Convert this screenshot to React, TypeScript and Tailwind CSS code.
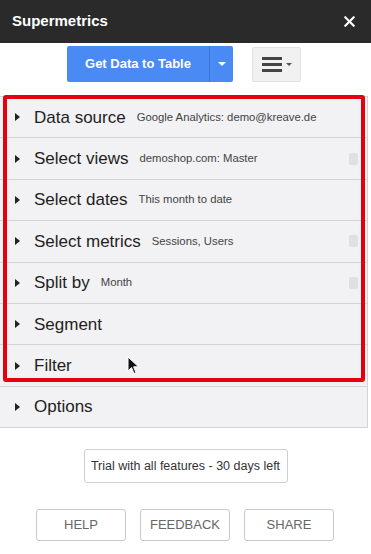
import { X } from 'lucide-react';

type Row = { title: string; sub?: string; knob?: boolean };

const ROWS: Row[] = [
  { title: 'Data source', sub: 'Google Analytics: demo@kreave.de' },
  { title: 'Select views', sub: 'demoshop.com: Master', knob: true },
  { title: 'Select dates', sub: 'This month to date' },
  { title: 'Select metrics', sub: 'Sessions, Users', knob: true },
  { title: 'Split by', sub: 'Month', knob: true },
  { title: 'Segment' },
  { title: 'Filter' },
  { title: 'Options' },
];

function SectionRow({ row }: { row: Row }) {
  return (
    <div className="flex items-center h-[41.4px] border-b border-[#d4d3d6] bg-[#f2f1f3] pl-[15px] pr-[9px]">
      {/* triangle */}
      <span className="w-0 h-0 border-y-[4px] border-y-transparent border-l-[5px] border-l-[#222] mr-[14px]" />
      <span className="text-[17px] text-[#1e1e1e] leading-none">{row.title}</span>
      {row.sub && <span className="ml-[11px] text-[11.3px] text-[#444] leading-none">{row.sub}</span>}
      <span className="flex-1" />
      {row.knob && <span className="w-[9px] h-[12px] rounded-[2px] bg-[#e0dfe2]" />}
    </div>
  );
}

export default function App() {
  return (
    <div className="w-[371px] h-[554px] bg-white overflow-hidden relative font-['Liberation_Sans',Arial,sans-serif]">
      {/* header */}
      <div className="h-[43px] bg-[#2a2a2a] flex items-center justify-between pl-[12px] pr-[13px]">
        <span className="text-white text-[15px] font-bold">Supermetrics</span>
        <X className="text-white" size={17} strokeWidth={3} />
      </div>

      {/* toolbar */}
      <div className="flex items-center h-[40px] mt-[1px] pl-[67px]">
        <div className="flex h-[36px] rounded-[2px] bg-[#4a8af4] overflow-hidden">
          <span className="w-[142px] flex items-center justify-center text-white text-[13px] font-bold">
            Get Data to Table
          </span>
          <span className="w-[24px] flex items-center justify-center border-l border-[#3a76d8]">
            <span className="w-0 h-0 border-x-[4px] border-x-transparent border-t-[4px] border-t-white" />
          </span>
        </div>
        <div className="ml-[19px] w-[49px] h-[35px] rounded-[2px] bg-[#f1f1f1] border border-[#e2e2e2] flex items-center justify-center gap-[4px]">
          <span className="flex flex-col gap-[3px]">
            <span className="block w-[20px] h-[3px] bg-[#444]" />
            <span className="block w-[20px] h-[3px] bg-[#444]" />
            <span className="block w-[20px] h-[3px] bg-[#444]" />
          </span>
          <span className="w-0 h-0 border-x-[3px] border-x-transparent border-t-[3px] border-t-[#555]" />
        </div>
      </div>

      {/* sections */}
      <div className="relative mt-[12px] mr-[3px] border-t border-r border-[#d4d3d6]">
        {ROWS.map((r) => (
          <SectionRow key={r.title} row={r} />
        ))}
        {/* red highlight */}
        <div className="absolute left-[3px] top-[-2px] w-[362px] h-[287px] border-[4px] border-[#e3000f] rounded-[3px]" />
        {/* cursor */}
        <svg className="absolute left-[127px] top-[259px]" width="13" height="19" viewBox="0 0 13 19">
          <path d="M1 1 L1 15 L4.5 11.5 L7 17.5 L9 16.6 L6.6 10.8 L11.5 10.8 Z" fill="#111" stroke="#fff" strokeWidth="1" />
        </svg>
      </div>

      {/* trial */}
      <div className="flex justify-center mt-[21px]">
        <div className="w-[204px] h-[34px] border border-[#cfcfcf] rounded-[3px] flex items-center justify-center text-[12.5px] text-[#333]">
          Trial with all features - 30 days left
        </div>
      </div>

      {/* buttons */}
      <div className="flex gap-[14px] pl-[36px] mt-[26px]">
        {['HELP', 'FEEDBACK', 'SHARE'].map((b) => (
          <div
            key={b}
            className="w-[90px] h-[32px] border border-[#c8c8c8] rounded-[3px] flex items-center justify-center text-[13px] text-[#666]"
          >
            {b}
          </div>
        ))}
      </div>
    </div>
  );
}
